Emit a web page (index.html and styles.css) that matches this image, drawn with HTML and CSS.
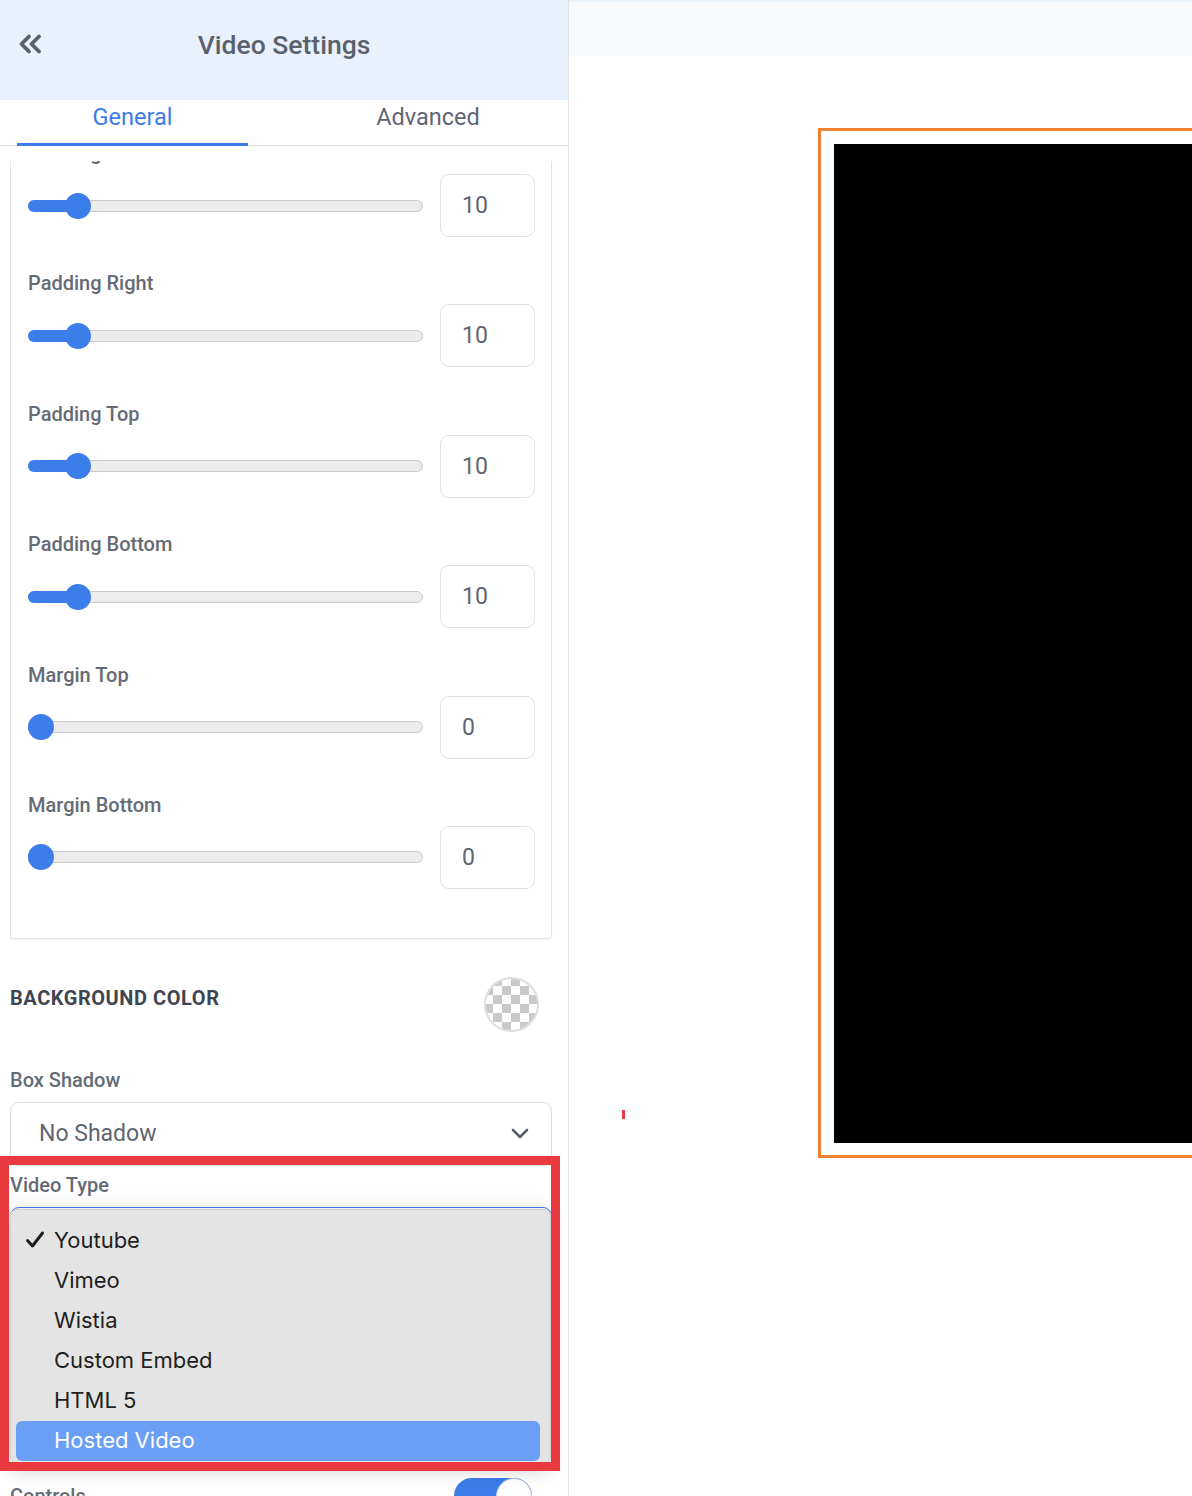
FILE: index.html
```html
<!DOCTYPE html>
<html lang="en">
<head>
<meta charset="utf-8">
<title>Video Settings</title>
<link rel="stylesheet" href="styles.css">
</head>
<body>
<div class="app">
  <aside class="sidebar">
    <header class="sb-head">
      <button class="back" aria-label="Back">
        <svg width="26" height="20" viewBox="0 0 26 20"><path d="M11 2.5 L3.5 10 L11 17.5 M21 2.5 L13.5 10 L21 17.5" fill="none" stroke="#5b616c" stroke-width="3.8" stroke-linecap="round" stroke-linejoin="round"/></svg>
      </button>
      <h1 class="title">Video Settings</h1>
    </header>
    <nav class="tabs">
      <div class="tab active">General</div>
      <div class="tab">Advanced</div>
    </nav>
    <div class="scroll">
      <div class="scroll-inner">
        <section class="card">
          <div class="row">
            <div class="label">Padding Left</div>
            <div class="ctrl">
              <div class="track" style="--v:0.1"><div class="fill"></div><div class="thumb"></div></div>
              <div class="num">10</div>
            </div>
          </div>
          <div class="row">
            <div class="label">Padding Right</div>
            <div class="ctrl">
              <div class="track" style="--v:0.1"><div class="fill"></div><div class="thumb"></div></div>
              <div class="num">10</div>
            </div>
          </div>
          <div class="row">
            <div class="label">Padding Top</div>
            <div class="ctrl">
              <div class="track" style="--v:0.1"><div class="fill"></div><div class="thumb"></div></div>
              <div class="num">10</div>
            </div>
          </div>
          <div class="row">
            <div class="label">Padding Bottom</div>
            <div class="ctrl">
              <div class="track" style="--v:0.1"><div class="fill"></div><div class="thumb"></div></div>
              <div class="num">10</div>
            </div>
          </div>
          <div class="row">
            <div class="label">Margin Top</div>
            <div class="ctrl">
              <div class="track" style="--v:0"><div class="fill"></div><div class="thumb"></div></div>
              <div class="num">0</div>
            </div>
          </div>
          <div class="row">
            <div class="label">Margin Bottom</div>
            <div class="ctrl">
              <div class="track" style="--v:0"><div class="fill"></div><div class="thumb"></div></div>
              <div class="num">0</div>
            </div>
          </div>
        </section>

        <div class="bg-row">
          <div class="section-title">BACKGROUND COLOR</div>
          <div class="swatch"></div>
        </div>

        <div class="field shadow-field">
          <div class="label">Box Shadow</div>
          <div class="select">
            <span>No Shadow</span>
            <svg width="18" height="11" viewBox="0 0 18 11"><path d="M2 2 L9 9 L16 2" fill="none" stroke="#5b616c" stroke-width="2.6" stroke-linecap="round" stroke-linejoin="round"/></svg>
          </div>
        </div>

        <div class="field type-field">
          <div class="label">Video Type</div>
          <div class="select focused"><span>Hosted Video</span></div>
        </div>

        <div class="toggle-row">
          <div class="label">Controls</div>
          <div class="toggle"><div class="knob"></div></div>
        </div>
      </div>
    </div>

    <div class="popup">
      <div class="opt checked">
        <svg class="check" width="20" height="20" viewBox="0 0 20 20"><path d="M2.5 10.5 L7.5 16 L17.5 3" fill="none" stroke="#1d1d1f" stroke-width="3" stroke-linecap="round" stroke-linejoin="round"/></svg>
        Youtube
      </div>
      <div class="opt">Vimeo</div>
      <div class="opt">Wistia</div>
      <div class="opt">Custom Embed</div>
      <div class="opt">HTML 5</div>
      <div class="opt hl">Hosted Video</div>
    </div>
    <div class="annot"></div>
  </aside>

  <main class="canvas">
    <div class="topstrip"></div>
    <div class="stage">
      <div class="frame"><div class="video"></div></div>
    </div>
    <div class="mark"></div>
  </main>
</div>
</body>
</html>
```

FILE: styles.css
```css
* { box-sizing: border-box; }
html, body { margin: 0; padding: 0; }
body {
  width: 1192px;
  height: 1496px;
  overflow: hidden;
  background: #fff;
  font-family: Roboto, "Liberation Sans", sans-serif;
}
.app {
  display: flex;
  height: 1496px;
}

/* Sidebar */
.sidebar {
  position: relative;
  width: 569px;
  flex: none;
  height: 1496px;
  border-right: 1px solid #e2e2e2;
  background: #fff;
  display: flex;
  flex-direction: column;
  overflow: hidden;
}
.sb-head {
  height: 100px;
  flex: none;
  background: #e8f1fc;
  display: flex;
  align-items: center;
  position: relative;
}
.back {
  border: 0;
  background: none;
  padding: 0;
  margin-left: 18px;
  margin-top: -12px;
  display: flex;
}
.title {
  position: absolute;
  left: 0; right: 0;
  top: 28px;
  margin: 0;
  text-align: center;
  font-size: 26.5px;
  font-weight: 500;
  color: #5b616c;
  line-height: 34px;
}
.tabs {
  height: 46px;
  flex: none;
  display: grid;
  grid-template-columns: 231px 280px;
  column-gap: 40px;
  padding-left: 17px;
  border-bottom: 1px solid #dcdcdc;
}
.tab {
  text-align: center;
  font-size: 23.5px;
  color: #5f6571;
  line-height: 34px;
}
.tab.active {
  color: #3b7de9;
  border-bottom: 3px solid #3b7de9;
  margin-bottom: -1px;
}
.scroll {
  margin-top: 15px;
  flex: 1;
  overflow: hidden;
}
.scroll-inner {
  margin-top: -40px;
  padding: 0 16px 0 10px;
}

/* Card */
.card {
  border: 1px solid #e4e4e4;
  border-radius: 3px;
  padding: 19px 16px 49px 17px;
  box-shadow: 0 1px 2px rgba(0,0,0,0.06);
  display: flex;
  flex-direction: column;
  gap: 34.4px;
}
.label {
  font-size: 20px;
  font-weight: 500;
  color: #656b75;
  line-height: 25px;
}
.ctrl {
  margin-top: 8px;
  display: flex;
  align-items: center;
  gap: 17px;
}
.track {
  position: relative;
  flex: 1;
  height: 12px;
  border-radius: 6px;
  background: #ececec;
  border: 1px solid #cbcbcb;
}
.fill {
  position: absolute;
  left: -1px; top: -1px; bottom: -1px;
  width: calc((100% - 26px) * var(--v) + 14px);
  background: #3b7de9;
  border-radius: 6px;
}
.thumb {
  position: absolute;
  top: 50%;
  left: calc((100% - 26px) * var(--v) - 1px);
  width: 26px;
  height: 26px;
  margin-top: -13px;
  border-radius: 50%;
  background: #3b7de9;
}
.num {
  width: 95px;
  height: 63px;
  flex: none;
  border: 1px solid #e2e2e2;
  border-radius: 9px;
  display: flex;
  align-items: center;
  padding-left: 21px;
  font-size: 23px;
  color: #5f6571;
}

/* Background color */
.bg-row {
  display: flex;
  justify-content: space-between;
  align-items: flex-start;
  margin-top: 38px;
  padding-right: 13px;
}
.section-title {
  margin-top: 9px;
  font-size: 20px;
  font-weight: 700;
  letter-spacing: 0.55px;
  color: #3f4551;
  line-height: 25px;
}
.swatch {
  width: 55px;
  height: 55px;
  border-radius: 50%;
  border: 2px solid #dedede;
  background: repeating-conic-gradient(#c9c9c9 0 25%, #ffffff 0 50%) -2px -2px / 18px 18px;
}

/* Fields */
.field .select {
  margin-top: 9px;
  border: 1px solid #dedede;
  border-radius: 9px;
  display: flex;
  align-items: center;
  justify-content: space-between;
  padding: 0 22px 0 28px;
  font-size: 23px;
  color: #5f6571;
}
.shadow-field { margin-top: 36px; }
.shadow-field .select { height: 64px; }
.type-field { margin-top: 7px; }
.type-field .select { height: 62px; border-color: #3b7de9; }

.toggle-row {
  margin-top: 209px;
  display: flex;
  justify-content: space-between;
  align-items: flex-start;
  padding-right: 20px;
}
.toggle-row .label { padding-top: 6px; }
.toggle {
  width: 78px;
  height: 36px;
  border-radius: 18px;
  background: #3b7de9;
  position: relative;
}
.knob {
  position: absolute;
  right: 0; top: 0;
  width: 36px; height: 36px;
  border-radius: 50%;
  background: #fff;
  border: 1px solid #b8c6dc;
}

/* Native select popup overlay */
.popup {
  position: absolute;
  left: 10px;
  top: 1209px;
  width: 541px;
  height: 254px;
  background: #e4e4e4;
  border: 1px solid #cfcfcf;
  border-radius: 7px;
  padding: 11px 10px 0 5px;
  box-shadow: 0 8px 18px rgba(0,0,0,0.18), 0 -6px 20px rgba(0,0,0,0.05);
  font-family: Inter, "Noto Sans", sans-serif;
  z-index: 2;
}
.opt {
  position: relative;
  height: 40px;
  line-height: 38px;
  padding-left: 38px;
  font-size: 22px;
  color: #1f1f21;
  border-radius: 6px;
}
.opt .check {
  position: absolute;
  left: 9px;
  top: 9px;
}
.opt.hl {
  background: #6b9ff5;
  color: #fff;
}

.annot {
  position: absolute;
  left: 0;
  top: 1156px;
  width: 560px;
  height: 315px;
  border: 9px solid #e93a3f;
  z-index: 3;
}

/* Canvas */
.canvas {
  position: relative;
  flex: 1;
  display: flex;
  flex-direction: column;
  overflow: hidden;
}
.topstrip {
  height: 56px;
  flex: none;
  background: #f7f9fa;
  border-top: 2px solid #e9f1fb;
}
.stage {
  padding: 72px 0 0 249px;
}
.frame {
  width: 520px;
  border: 3px solid #f07f30;
  padding: 13px 13px 12px 13px;
}
.video {
  height: 999px;
  background: #000;
}
.mark {
  position: absolute;
  left: 53px;
  top: 1110px;
  width: 3px;
  height: 9px;
  background: #e93a3f;
}
```
